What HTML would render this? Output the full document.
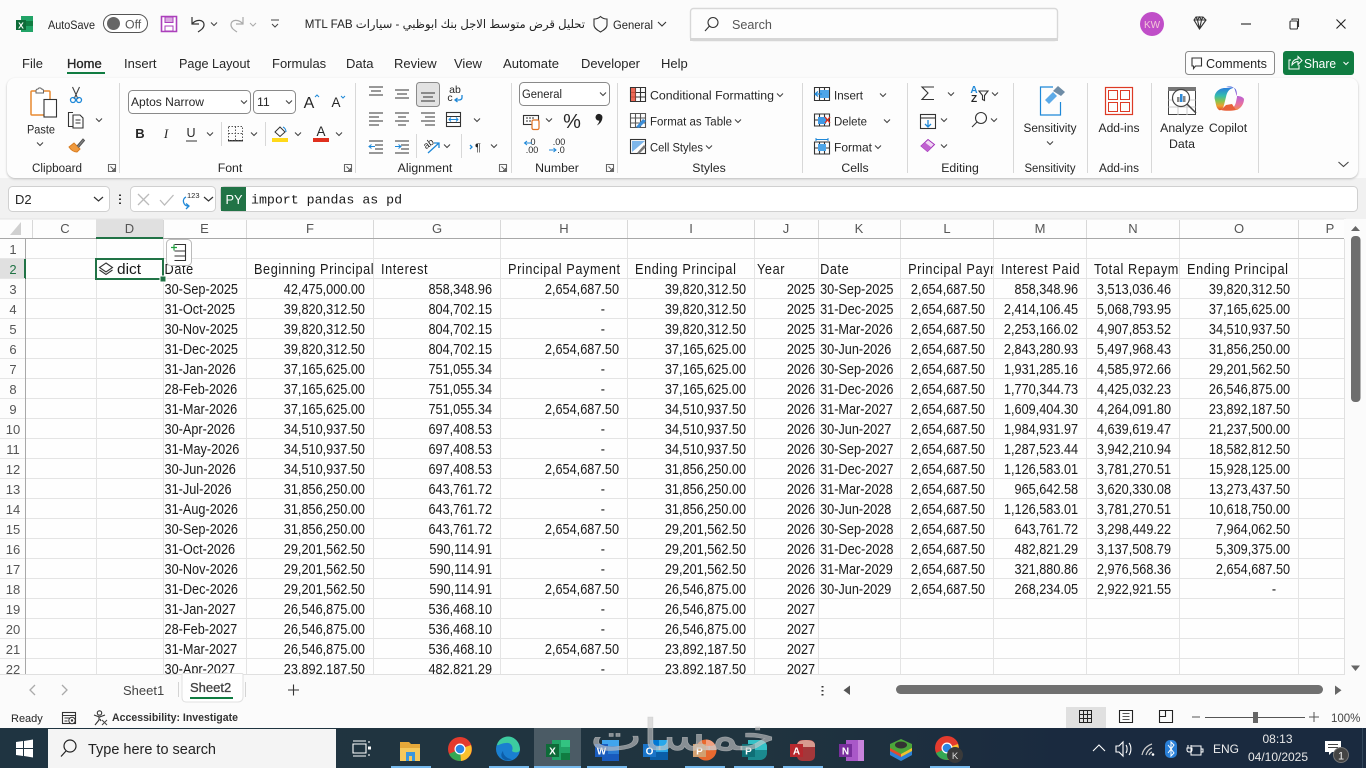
<!DOCTYPE html>
<html lang="en"><head><meta charset="utf-8"><title>Excel</title>
<style>
*{box-sizing:border-box}
html,body{margin:0;padding:0;width:1366px;height:768px;overflow:hidden;background:#fbfbfb}
body{position:relative;font-family:"Liberation Sans",sans-serif;color:#222}
#band{position:absolute;left:0;top:178px;width:1366px;height:41px;background:#f1f1f1}
#rib{position:absolute;left:7px;top:78px;width:1351px;height:100px;background:#fdfdfd;border-radius:8px;box-shadow:0 1px 2px #bbb}
#grid{position:absolute;left:25px;top:239px;width:1319px;height:435px;overflow:hidden;background-color:#fefefe;background-image:repeating-linear-gradient(to bottom,transparent 0,transparent 19px,#e4e4e4 19px,#e4e4e4 20px)}
#vl{position:absolute;left:0;top:0;width:1319px;height:435px}
table{position:absolute;left:0;top:1px;transform:scaleX(.87);transform-origin:0 0;border-collapse:separate;border-spacing:0;table-layout:fixed;width:1518.4px;font-family:"Liberation Sans",sans-serif;font-size:14.6px;color:#1a1a1a}
td{height:20px;padding:0 9.2px 0 0;text-align:right;white-space:nowrap;overflow:hidden;line-height:19px}
td.l{text-align:left;padding:0 0 0 1.8px}
td.k{text-align:left;padding:0 0 0 2.3px}
td.h{text-align:left;padding:0 0 0 9.2px;letter-spacing:.7px}
td.hl{letter-spacing:.7px}
td.y{padding-right:3.4px}
td.d{padding-right:25.3px}
svg#o{position:absolute;left:0;top:0;width:1366px;height:768px;overflow:hidden}
svg#o text{font-family:"Liberation Sans",sans-serif;font-size:12.3px;fill:#262626}
svg#o .m{text-anchor:middle}
svg#o .t{font-size:13px}
svg#o .n{font-size:14.6px;fill:#1a1a1a}
.s{fill:none;stroke:#333;stroke-width:1.1}
svg#o .rh{font-size:13px;fill:#555;text-anchor:middle}
svg#o .ch{font-size:13px;fill:#555;text-anchor:middle}
.b{fill:none;stroke:#1e88d8;stroke-width:1.3}
#title{position:absolute;left:299px;width:286px;top:16px;direction:rtl;text-align:right;font:11.6px "Liberation Sans","DejaVu Sans",sans-serif;color:#222;white-space:nowrap;line-height:17px}
</style></head><body>
<div id="band"></div><div id="rib"></div>
<div id="grid">
<svg id="vl" viewBox="0 0 1319 435"><path d="M71.500 0v435M138.500 0v435M221.500 0v435M348.500 0v435M475.500 0v435M602.500 0v435M729.500 0v435M793.500 0v435M875.500 0v435M968.500 0v435M1061.500 0v435M1154.500 0v435M1273.500 0v435" stroke="#e4e4e4" fill="none"/></svg>
<table><colgroup><col style="width:81.6px"><col style="width:77px"><col style="width:95.4px"><col style="width:146px"><col style="width:146px"><col style="width:146px"><col style="width:146px"><col style="width:73.6px"><col style="width:94.25px"><col style="width:106.9px"><col style="width:106.9px"><col style="width:106.9px"><col style="width:136.8px"><col style="width:55.2px"></colgroup>
<tr><td></td><td></td><td></td><td></td><td></td><td></td><td></td><td></td><td></td><td></td><td></td><td></td><td></td><td></td></tr>
<tr><td></td><td></td><td class="l hl">Date</td><td class="h">Beginning Principal</td><td class="h">Interest</td><td class="h">Principal Payment</td><td class="h">Ending Principal</td><td class="k hl" style="padding-left:3.4px">Year</td><td class="k hl">Date</td><td class="h">Principal Payment</td><td class="h">Interest Paid</td><td class="h">Total Repayment</td><td class="h">Ending Principal</td><td></td></tr>
<tr><td></td><td></td><td class="l">30-Sep-2025</td><td>42,475,000.00</td><td>858,348.96</td><td>2,654,687.50</td><td>39,820,312.50</td><td class="y">2025</td><td class="k">30-Sep-2025</td><td>2,654,687.50</td><td>858,348.96</td><td>3,513,036.46</td><td>39,820,312.50</td><td></td></tr>
<tr><td></td><td></td><td class="l">31-Oct-2025</td><td>39,820,312.50</td><td>804,702.15</td><td class="d">-</td><td>39,820,312.50</td><td class="y">2025</td><td class="k">31-Dec-2025</td><td>2,654,687.50</td><td>2,414,106.45</td><td>5,068,793.95</td><td>37,165,625.00</td><td></td></tr>
<tr><td></td><td></td><td class="l">30-Nov-2025</td><td>39,820,312.50</td><td>804,702.15</td><td class="d">-</td><td>39,820,312.50</td><td class="y">2025</td><td class="k">31-Mar-2026</td><td>2,654,687.50</td><td>2,253,166.02</td><td>4,907,853.52</td><td>34,510,937.50</td><td></td></tr>
<tr><td></td><td></td><td class="l">31-Dec-2025</td><td>39,820,312.50</td><td>804,702.15</td><td>2,654,687.50</td><td>37,165,625.00</td><td class="y">2025</td><td class="k">30-Jun-2026</td><td>2,654,687.50</td><td>2,843,280.93</td><td>5,497,968.43</td><td>31,856,250.00</td><td></td></tr>
<tr><td></td><td></td><td class="l">31-Jan-2026</td><td>37,165,625.00</td><td>751,055.34</td><td class="d">-</td><td>37,165,625.00</td><td class="y">2026</td><td class="k">30-Sep-2026</td><td>2,654,687.50</td><td>1,931,285.16</td><td>4,585,972.66</td><td>29,201,562.50</td><td></td></tr>
<tr><td></td><td></td><td class="l">28-Feb-2026</td><td>37,165,625.00</td><td>751,055.34</td><td class="d">-</td><td>37,165,625.00</td><td class="y">2026</td><td class="k">31-Dec-2026</td><td>2,654,687.50</td><td>1,770,344.73</td><td>4,425,032.23</td><td>26,546,875.00</td><td></td></tr>
<tr><td></td><td></td><td class="l">31-Mar-2026</td><td>37,165,625.00</td><td>751,055.34</td><td>2,654,687.50</td><td>34,510,937.50</td><td class="y">2026</td><td class="k">31-Mar-2027</td><td>2,654,687.50</td><td>1,609,404.30</td><td>4,264,091.80</td><td>23,892,187.50</td><td></td></tr>
<tr><td></td><td></td><td class="l">30-Apr-2026</td><td>34,510,937.50</td><td>697,408.53</td><td class="d">-</td><td>34,510,937.50</td><td class="y">2026</td><td class="k">30-Jun-2027</td><td>2,654,687.50</td><td>1,984,931.97</td><td>4,639,619.47</td><td>21,237,500.00</td><td></td></tr>
<tr><td></td><td></td><td class="l">31-May-2026</td><td>34,510,937.50</td><td>697,408.53</td><td class="d">-</td><td>34,510,937.50</td><td class="y">2026</td><td class="k">30-Sep-2027</td><td>2,654,687.50</td><td>1,287,523.44</td><td>3,942,210.94</td><td>18,582,812.50</td><td></td></tr>
<tr><td></td><td></td><td class="l">30-Jun-2026</td><td>34,510,937.50</td><td>697,408.53</td><td>2,654,687.50</td><td>31,856,250.00</td><td class="y">2026</td><td class="k">31-Dec-2027</td><td>2,654,687.50</td><td>1,126,583.01</td><td>3,781,270.51</td><td>15,928,125.00</td><td></td></tr>
<tr><td></td><td></td><td class="l">31-Jul-2026</td><td>31,856,250.00</td><td>643,761.72</td><td class="d">-</td><td>31,856,250.00</td><td class="y">2026</td><td class="k">31-Mar-2028</td><td>2,654,687.50</td><td>965,642.58</td><td>3,620,330.08</td><td>13,273,437.50</td><td></td></tr>
<tr><td></td><td></td><td class="l">31-Aug-2026</td><td>31,856,250.00</td><td>643,761.72</td><td class="d">-</td><td>31,856,250.00</td><td class="y">2026</td><td class="k">30-Jun-2028</td><td>2,654,687.50</td><td>1,126,583.01</td><td>3,781,270.51</td><td>10,618,750.00</td><td></td></tr>
<tr><td></td><td></td><td class="l">30-Sep-2026</td><td>31,856,250.00</td><td>643,761.72</td><td>2,654,687.50</td><td>29,201,562.50</td><td class="y">2026</td><td class="k">30-Sep-2028</td><td>2,654,687.50</td><td>643,761.72</td><td>3,298,449.22</td><td>7,964,062.50</td><td></td></tr>
<tr><td></td><td></td><td class="l">31-Oct-2026</td><td>29,201,562.50</td><td>590,114.91</td><td class="d">-</td><td>29,201,562.50</td><td class="y">2026</td><td class="k">31-Dec-2028</td><td>2,654,687.50</td><td>482,821.29</td><td>3,137,508.79</td><td>5,309,375.00</td><td></td></tr>
<tr><td></td><td></td><td class="l">30-Nov-2026</td><td>29,201,562.50</td><td>590,114.91</td><td class="d">-</td><td>29,201,562.50</td><td class="y">2026</td><td class="k">31-Mar-2029</td><td>2,654,687.50</td><td>321,880.86</td><td>2,976,568.36</td><td>2,654,687.50</td><td></td></tr>
<tr><td></td><td></td><td class="l">31-Dec-2026</td><td>29,201,562.50</td><td>590,114.91</td><td>2,654,687.50</td><td>26,546,875.00</td><td class="y">2026</td><td class="k">30-Jun-2029</td><td>2,654,687.50</td><td>268,234.05</td><td>2,922,921.55</td><td class="d">-</td><td></td></tr>
<tr><td></td><td></td><td class="l">31-Jan-2027</td><td>26,546,875.00</td><td>536,468.10</td><td class="d">-</td><td>26,546,875.00</td><td class="y">2027</td><td></td><td></td><td></td><td></td><td></td><td></td></tr>
<tr><td></td><td></td><td class="l">28-Feb-2027</td><td>26,546,875.00</td><td>536,468.10</td><td class="d">-</td><td>26,546,875.00</td><td class="y">2027</td><td></td><td></td><td></td><td></td><td></td><td></td></tr>
<tr><td></td><td></td><td class="l">31-Mar-2027</td><td>26,546,875.00</td><td>536,468.10</td><td>2,654,687.50</td><td>23,892,187.50</td><td class="y">2027</td><td></td><td></td><td></td><td></td><td></td><td></td></tr>
<tr><td></td><td></td><td class="l">30-Apr-2027</td><td>23,892,187.50</td><td>482,821.29</td><td class="d">-</td><td>23,892,187.50</td><td class="y">2027</td><td></td><td></td><td></td><td></td><td></td><td></td></tr>
</table></div>
<div id="title">تحليل قرض متوسط الاجل بنك ابوظبي - سيارات MTL FAB</div>

<svg id="o" viewBox="0 0 1366 768" xmlns="http://www.w3.org/2000/svg">
<defs><path id="cv" d="M-3 -1.5L0 1.5L3 -1.5" fill="none" stroke="#444" stroke-width="1.1"/>
<linearGradient id="cl" x1="0" y1="0" x2="0" y2="1"><stop offset="0" stop-color="#2a7fdc"/><stop offset=".35" stop-color="#34bcae"/><stop offset=".6" stop-color="#8cc34a"/><stop offset=".8" stop-color="#f0a030"/><stop offset="1" stop-color="#e0502c"/></linearGradient>
<linearGradient id="cr" x1="0" y1="0" x2="0" y2="1"><stop offset="0" stop-color="#2c5fd8"/><stop offset=".4" stop-color="#b860d8"/><stop offset=".75" stop-color="#e870a0"/><stop offset="1" stop-color="#f09050"/></linearGradient>
<linearGradient id="tb" x1="0" y1="0" x2="1" y2="0"><stop offset="0" stop-color="#1f3441"/><stop offset=".55" stop-color="#20343f"/><stop offset=".78" stop-color="#1a2a3f"/><stop offset="1" stop-color="#1a2a3f"/></linearGradient></defs>

<!-- title bar -->
<rect x="21" y="16" width="12" height="16" fill="#21a366"/><rect x="21" y="21" width="12" height="5" fill="#107c41"/><rect x="16" y="20" width="10" height="10" fill="#0e6b38"/><text x="21" y="28.500" class="m" style="font-size:8.500px;font-weight:bold;fill:#fff">X</text>
<text x="48" y="29" textLength="47" lengthAdjust="spacingAndGlyphs">AutoSave</text>
<rect x="103.500" y="14.500" width="44" height="18" rx="9" fill="#fff" stroke="#555"/><circle cx="113.500" cy="23.500" r="6.500" fill="#666"/><text x="125" y="28.500" style="fill:#555">Off</text>
<path d="M161.500 16.500h15v15h-15z" fill="#fff" stroke="#ab3fbb" stroke-width="1.600"/><rect x="165" y="17" width="8" height="5.500" fill="#d9a9e0" stroke="#ab3fbb"/><rect x="165" y="26" width="8" height="5" fill="none" stroke="#ab3fbb"/>
<path d="M192 17v7h7M192 24c4-5 12-5 12 1c0 3-3 5-6 7" fill="none" stroke="#333" stroke-width="1.200"/><use href="#cv" x="214" y="24"/>
<path d="M243 17v7h-7M243 24c-4-5-12-5-12 1c0 3 3 5 6 7" fill="none" stroke="#aaa" stroke-width="1.200"/><path d="M250 23l3 3l3-3" fill="none" stroke="#aaa"/>
<path d="M271 20h8M272 24l3 3l3-3" fill="none" stroke="#444"/>
<path d="M600.500 16.500c2 2 4 2.500 6.500 2.500v6c0 3-3 5-6.500 7c-3.500-2-6.500-4-6.500-7v-6c2.500 0 4.500-.5 6.500-2.500z" fill="none" stroke="#333" stroke-width="1.100"/>
<text x="613" y="29" textLength="40" lengthAdjust="spacingAndGlyphs">General</text><path d="M658 22l4 4l4-4" fill="none" stroke="#333" stroke-width="1.100"/>
<rect x="690.500" y="8.500" width="367" height="32" rx="3" fill="#fdfdfd" stroke="#d8d8d8" stroke-width="1.400"/>
<rect x="690" y="38" width="368" height="3" fill="#d6d6d6"/>
<circle cx="713" cy="22.500" r="5" class="s"/><path d="M709.500 26l-4.500 5" class="s"/><text x="732" y="29" style="fill:#555;font-size:12.600px">Search</text>
<circle cx="1152" cy="24" r="12" fill="#c04ec8"/><text x="1152" y="28" class="m" style="font-size:10px;fill:#f3c7d8">KW</text>
<path d="M1194 20l2-3h7l3 3l-6.500 9zM1194 20h12M1197.500 20l2 9l2-9M1196 17l1.500 3l2-3l2 3l1.500-3" class="s"/>
<path d="M1241 24h10" stroke="#222" stroke-width="1.100"/><rect x="1290" y="21" width="7.500" height="8" rx="1" class="s"/><path d="M1292 20v-1h6.500v7.500h-1" class="s"/><path d="M1336.500 19.500l9 9M1345.500 19.500l-9 9" stroke="#222" stroke-width="1.100"/>

<!-- tabs -->
<g><text x="22" y="68" class="t">File</text><text x="67" y="68" class="t" style="stroke:#222;stroke-width:.35">Home</text><text x="124" y="68" class="t">Insert</text><text x="179" y="68" class="t" textLength="71" lengthAdjust="spacingAndGlyphs">Page Layout</text><text x="272" y="68" class="t">Formulas</text><text x="346" y="68" class="t">Data</text><text x="394" y="68" class="t">Review</text><text x="454" y="68" class="t">View</text><text x="503" y="68" class="t" textLength="56" lengthAdjust="spacingAndGlyphs">Automate</text><text x="581" y="68" class="t" textLength="59" lengthAdjust="spacingAndGlyphs">Developer</text><text x="661" y="68" class="t">Help</text></g>
<rect x="67" y="72" width="38" height="2" fill="#107c41"/>
<rect x="1185.500" y="51.500" width="89" height="23" rx="3" fill="#fdfdfd" stroke="#8a8a8a"/>
<path d="M1192 58h9.500v8h-6l-2 2.500v-2.500h-1.500z" class="s"/><text x="1206" y="68" style="font-size:12.600px" textLength="61" lengthAdjust="spacingAndGlyphs">Comments</text>
<rect x="1283" y="51" width="71" height="24" rx="3" fill="#107c41"/>
<path d="M1291 60h-2v9h10v-4M1292 65c0-4 3-6 6-6v-2.500l4 4l-4 4v-3c-2 0-4 1-6 3.500z" fill="none" stroke="#fff"/><text x="1304" y="68" style="font-size:12.800px;fill:#fff" textLength="32" lengthAdjust="spacingAndGlyphs">Share</text><path d="M1343.500 62l2.500 2.500l2.500-2.500" fill="none" stroke="#fff"/>

<!-- ribbon separators -->
<path d="M119.500 83v90M355.500 83v90M511.500 83v90M617.500 83v90M802.500 83v90M907.500 83v90M1013.500 83v90M1087.500 83v90M1151.500 83v90M1258.500 83v90" stroke="#d8d8d8"/>
<path d="M221.500 122v24M265.500 122v24M416.500 134v24M461.500 134v24" stroke="#d8d8d8"/>

<!-- clipboard -->
<rect x="31" y="91" width="19" height="24" rx="1" fill="#fff" stroke="#e88a30" stroke-width="1.500"/><path d="M36 91c0-1.500 1-2 2-2c.5-1.500 3-1.500 3.500 0c1 0 2 .5 2 2v2h-7.500z" fill="#fff" stroke="#666"/><rect x="44" y="99.500" width="12.500" height="17.500" fill="#fff" stroke="#333" stroke-width="1.100"/>
<text x="41" y="133.500" class="m" textLength="28" lengthAdjust="spacingAndGlyphs">Paste</text><use href="#cv" x="40" y="144"/>
<path d="M72.500 87l5.500 12M79.500 87l-5.500 12" stroke="#444" stroke-width="1.100"/><circle cx="73" cy="100" r="2.500" fill="none" stroke="#1e88d8" stroke-width="1.300"/><circle cx="79" cy="100" r="2.500" fill="none" stroke="#1e88d8" stroke-width="1.300"/>
<path d="M73 112.500h-4.500v14h4M73 115h7l3 3v10h-10zM75.500 120h5M75.500 123h5" class="s"/><use href="#cv" x="99" y="120"/>
<path d="M69 147l5-4l6 6l-3 3c-3 0-6-2-8-5z" fill="#f09a3e" stroke="#d87c20"/><path d="M77 146l6-7l1.500 1.500l-6 7" fill="#888" stroke="#555"/>
<text x="57" y="172" class="m" textLength="50" lengthAdjust="spacingAndGlyphs">Clipboard</text>
<path d="M108.500 164.500h7v7h-7zM110.500 166.500l4 4M114.500 168v2.500h-2.500" class="s" style="stroke:#666"/>

<!-- font -->
<rect x="128.500" y="90.500" width="122" height="23" rx="4" fill="#fff" stroke="#8a8a8a"/><text x="131" y="106" textLength="73" lengthAdjust="spacingAndGlyphs">Aptos Narrow</text><use href="#cv" x="244" y="102"/>
<rect x="253.500" y="90.500" width="42" height="23" rx="4" fill="#fff" stroke="#8a8a8a"/><text x="257" y="106">11</text><use href="#cv" x="289" y="102"/>
<text x="309" y="108" class="m" style="font-size:16px">A</text><path d="M315 97l2-2l2 2" fill="none" stroke="#1e88d8"/><text x="336" y="107" class="m" style="font-size:13.500px">A</text><path d="M341 96l2 2l2-2" fill="none" stroke="#1e88d8"/>
<text x="140" y="138" class="m" style="font-weight:bold;font-size:13px">B</text><text x="166" y="138" class="m" style="font-style:italic;font-size:13px;font-family:'Liberation Serif',serif">I</text><text x="191" y="137" class="m" style="font-size:12.500px">U</text><path d="M186 141h11" stroke="#333"/><use href="#cv" x="210" y="134"/>
<path d="M228.500 126.500h14v14h-14zM235.500 126.500v14M228.500 133.500h14" fill="none" stroke="#555" stroke-dasharray="1.500 1.500"/><path d="M228 140.800h15" stroke="#222" stroke-width="1.200"/><use href="#cv" x="254" y="134"/>
<path d="M275 132l5-5l5 5l-5 4.500z" fill="none" stroke="#333"/><path d="M283 127c2 1 3 3 3 5" stroke="#1e88d8" fill="none"/><rect x="272" y="138" width="16" height="4" fill="#ffd91a"/><use href="#cv" x="298" y="134"/>
<text x="321" y="136" class="m" style="font-size:13.500px">A</text><rect x="313" y="138" width="16" height="4" fill="#e0301e"/><use href="#cv" x="339" y="134"/>
<text x="230" y="172" class="m">Font</text>
<path d="M344.500 164.500h7v7h-7zM346.500 166.500l4 4M350.500 168v2.500h-2.500" class="s" style="stroke:#666"/>

<!-- alignment -->
<rect x="416.500" y="82.500" width="23" height="24" rx="3" fill="#e2e2e2" stroke="#8a8a8a"/>
<path d="M369 87h14M371 91h10M369 95h14M395 90h14M397 94h10M395 98h14M421 93h14M423 97h10M421 101h14" class="s"/>
<text x="455" y="93" class="m" style="font-size:10.500px">ab</text><text x="450" y="101" class="m" style="font-size:10.500px">c</text><path d="M462 95v2.500c0 2-2 2.500-3.500 2.500h-3M457.500 98l-2.500 2l2.500 2" class="b"/>
<path d="M369 113h14M369 117h10M369 121h14M369 125h10M395 113h14M398 117h8M395 121h14M398 125h8M421 113h14M425 117h10M421 121h14M425 125h10" class="s"/>
<rect x="446.500" y="112.500" width="14" height="14" class="s"/><path d="M446.500 116.500h14M446.500 122.500h14" class="s"/><path d="M449 119.500h9M451 117.500l-2 2l2 2M456 117.500l2 2l-2 2" class="b" style="stroke-width:1"/><use href="#cv" x="477" y="120"/>
<path d="M369 141h14M375 145h8M375 149h8M369 153h14" class="s"/><path d="M369 146.500h6M371.500 144.500l-2.500 2l2.500 2" class="b" style="stroke-width:1"/>
<path d="M395 141h14M401 145h8M401 149h8M395 153h14" class="s"/><path d="M395 146.500h6M398.500 144.500l2.500 2l-2.500 2" class="b" style="stroke-width:1"/>
<text x="428" y="147" class="m" transform="rotate(-35 428 143)" style="font-size:9.500px">ab</text><path d="M428 153l11-10M434 143h5v5" class="b"/><use href="#cv" x="447" y="146"/>
<path d="M470 145l2 2l-2 2" class="b"/><text x="478" y="151" class="m" style="font-size:11px">¶</text><use href="#cv" x="494" y="146"/>
<text x="425" y="172" class="m">Alignment</text>
<path d="M499.500 164.500h7v7h-7zM501.500 166.500l4 4M505.500 168v2.500h-2.500" class="s" style="stroke:#666"/>

<!-- number -->
<rect x="519.500" y="82.500" width="90" height="23" rx="4" fill="#fff" stroke="#8a8a8a"/><text x="522" y="98" textLength="40" lengthAdjust="spacingAndGlyphs">General</text><use href="#cv" x="603" y="94"/>
<rect x="523.500" y="115.500" width="15" height="9" class="s"/><path d="M526 118h2M529 118h2M532 118h2M526 121h2M529 121h2" stroke="#333"/><rect x="532" y="120" width="7" height="9.500" rx="1.500" fill="#fff" stroke="#e07020" stroke-width="1.200"/><use href="#cv" x="549" y="120"/>
<text x="572" y="128" class="m" style="font-size:20px">%</text><path d="M595.500 117a3.500 3.500 0 1 1 6.800 1.500c-.4 3-2.500 5.500-5.500 7c1.500-2 2.500-3.500 2.500-5c-2 .5-3.800-1.200-3.800-3.500z" fill="#222"/>
<text x="533" y="145" class="m" style="font-size:9px">0</text><text x="532" y="153" class="m" style="font-size:9px">.00</text><path d="M525 143h7M527 141l-2.500 2l2.500 2" class="b" style="stroke-width:1"/>
<text x="559" y="145" class="m" style="font-size:9px">.00</text><text x="561" y="153" class="m" style="font-size:9px">.0</text><path d="M549 150h7M553.500 148l2.500 2l-2.500 2" class="b" style="stroke-width:1"/>
<text x="557" y="172" class="m">Number</text>
<path d="M606.500 164.500h7v7h-7zM608.500 166.500l4 4M612.500 168v2.500h-2.500" class="s" style="stroke:#666"/>

<!-- styles -->
<path d="M630.500 87.500h15v14h-15zM635.500 87.500v14M640.500 87.500v14M630.500 92.500h15M630.500 97h15" class="s"/><rect x="631" y="88" width="4.500" height="13" fill="#e8503a" opacity=".85"/>
<text x="650" y="99.500" textLength="124" lengthAdjust="spacingAndGlyphs">Conditional Formatting</text><use href="#cv" x="780" y="95"/>
<path d="M630.500 113.500h15v14h-15zM635.500 113.500v14M640.500 113.500v14M630.500 118h15M630.500 123h15" class="s" style="stroke:#555"/><path d="M636 127l7-8l3 2l-7 7z" fill="#3c8ed8"/>
<text x="650" y="125.500" textLength="82" lengthAdjust="spacingAndGlyphs">Format as Table</text><use href="#cv" x="738" y="121"/>
<rect x="630.500" y="139.500" width="15" height="14" class="s"/><path d="M632 152v-11h13z" fill="#7eb6ea"/><path d="M637 153l7-8l2 2l-7 7z" fill="#777"/>
<text x="650" y="151.500" textLength="53" lengthAdjust="spacingAndGlyphs">Cell Styles</text><use href="#cv" x="709" y="147"/>
<text x="709" y="172" class="m">Styles</text>

<!-- cells -->
<path d="M814.500 87.500h15v13h-15zM819.500 87.500v13M824.500 87.500v13M814.500 94h15" class="s"/><rect x="820" y="90" width="9" height="8" fill="#4ea5e8"/><path d="M822 94h-7M818 91.500l-3 2.500l3 2.500" fill="none" stroke="#1e88d8" stroke-width="1.200"/>
<text x="834" y="99.500" textLength="29" lengthAdjust="spacingAndGlyphs">Insert</text><use href="#cv" x="883" y="95"/>
<path d="M814.500 114h15v12h-15zM819.500 114v12M824.500 114v12M814.500 120h15" class="s"/><rect x="818" y="117" width="8" height="7" fill="#3f9ae6"/><path d="M825 117l5 6M830 117l-5 6" stroke="#e0301e" stroke-width="1.300"/>
<text x="834" y="125.500" textLength="33" lengthAdjust="spacingAndGlyphs">Delete</text><use href="#cv" x="887" y="121"/>
<path d="M814.500 142h15v12h-15zM819.500 142v12M824.500 142v12M814.500 148h15" class="s"/><rect x="818" y="144" width="8" height="7" fill="#4ea5e8"/><path d="M816 139.500h12M816 138v3M828 138v3" fill="none" stroke="#1e88d8"/>
<text x="834" y="151.500" textLength="38" lengthAdjust="spacingAndGlyphs">Format</text><use href="#cv" x="878" y="147"/>
<text x="855" y="172" class="m">Cells</text>

<!-- editing -->
<path d="M934 87h-12l6 6l-6 6.500h12" class="s"/><use href="#cv" x="951" y="94"/>
<text x="974" y="93" class="m" style="font-size:10px;fill:#1e88d8;font-weight:bold">A</text><text x="974" y="102" class="m" style="font-size:10px;font-weight:bold">Z</text><path d="M979 91h9l-3.500 4.500v5l-2-1v-4z" class="s"/><use href="#cv" x="995" y="94"/>
<rect x="920.500" y="114.500" width="15" height="14" class="s"/><path d="M920.500 118h15" class="s"/><path d="M928 120v7M925 124l3 3l3-3" class="b"/><use href="#cv" x="944" y="120"/>
<circle cx="981" cy="118" r="5.500" class="s"/><path d="M977 122l-5 5" class="s"/><use href="#cv" x="994" y="120"/>
<path d="M921 146l7-6.500l6.500 5l-7 7z" fill="#f0d8f4" stroke="#a030b8"/><path d="M921 146l4-3.500l6.500 5l-4 4z" fill="#c060d0"/><use href="#cv" x="944" y="146"/>
<text x="960" y="172" class="m">Editing</text>

<!-- sensitivity -->
<path d="M1053 87h-12.500v28h20v-13" fill="none" stroke="#1e88d8" stroke-width="1.200"/><path d="M1045 100l8-8l4 4l-8 8z" fill="#5caae8"/><path d="M1053 91l5-5l7 6l-4 4z" fill="#6e8ca6"/>
<text x="1050" y="132" class="m" textLength="53" lengthAdjust="spacingAndGlyphs">Sensitivity</text><use href="#cv" x="1050" y="143"/>
<text x="1050" y="172" class="m" textLength="51" lengthAdjust="spacingAndGlyphs">Sensitivity</text>
<!-- add-ins -->
<rect x="1105.500" y="87.500" width="27" height="27" fill="none" stroke="#dd3a25" stroke-width="1.200"/><rect x="1108.500" y="90.500" width="9" height="9" fill="none" stroke="#dd3a25"/><rect x="1120.500" y="90.500" width="9" height="9" fill="none" stroke="#dd3a25"/><rect x="1108.500" y="102.500" width="9" height="9" fill="none" stroke="#dd3a25"/><rect x="1120.500" y="102.500" width="9" height="9" fill="none" stroke="#dd3a25"/>
<text x="1119" y="132" class="m" textLength="41" lengthAdjust="spacingAndGlyphs">Add-ins</text><text x="1119" y="172" class="m" textLength="40" lengthAdjust="spacingAndGlyphs">Add-ins</text>
<!-- analyze -->
<path d="M1168.500 87.500h27v27h-27z" fill="#fff" stroke="#444"/><rect x="1168" y="87" width="28" height="4" fill="#777"/><path d="M1168.500 100h27M1168.500 107h27M1178 91v24M1187 91v24" stroke="#ccc"/><circle cx="1181" cy="98" r="8.500" fill="#fff" stroke="#444" stroke-width="1.200"/><path d="M1187 104l9 9" stroke="#444" stroke-width="1.500"/><rect x="1177" y="97" width="2.500" height="5" fill="#888"/><rect x="1180" y="94" width="2.500" height="8" fill="#2e8ad8"/><rect x="1183" y="96" width="2.500" height="6" fill="#888"/>
<text x="1182" y="132" class="m">Analyze</text><text x="1182" y="148" class="m">Data</text>
<!-- copilot -->
<path d="M1215 100c-2-7 4-12 10-12h8c-4 1-6 4-7 9l-2 8c-1 4-3 6-5 5c-3-2-3-6-4-10z" fill="url(#cl)"/><path d="M1226 88c3-1 8-1 9 3c1 3 1 5 2 6c3 0 6 1 7 3c0 5-3 9-7 11h-8c4-1 6-4 7-8l1-5c0-3 0-8-3-9z" fill="url(#cr)" transform="translate(0 -1)"/><path d="M1221 110c4 1 10 1 15 0l-4-6l-6 1z" fill="#e8603a"/>
<text x="1228" y="132" class="m">Copilot</text>
<path d="M1338.500 162l5 4.500l5-4.500" fill="none" stroke="#444" stroke-width="1.100"/>

<!-- formula bar -->
<rect x="8.500" y="186.500" width="101" height="25" rx="4" fill="#fff" stroke="#d0d0d0"/><text x="15" y="204" style="font-size:13px">D2</text><path d="M94 197l4.500 4l4.500-4" fill="none" stroke="#333" stroke-width="1.200"/>
<path d="M120 194.500v1.500M120 198.500v1.500M120 202.500v1.500" stroke="#333" stroke-width="2"/>
<rect x="130.500" y="186.500" width="85" height="25" rx="4" fill="#fff" stroke="#d0d0d0"/><path d="M138 194l11 11M149 194l-11 11" stroke="#bbb" stroke-width="1.300"/><path d="M160 200l4.500 5l9-10" fill="none" stroke="#bbb" stroke-width="1.300"/>
<path d="M186 197c-2 1-3 3-2.500 5c.5 2 2 4 4.500 4M186 209l3-3l-3-2.500" class="b"/><text x="187" y="198" style="font-size:7.500px">123</text><path d="M204 197l4.500 4l4.500-4" fill="none" stroke="#333" stroke-width="1.200"/>
<rect x="220.500" y="186.500" width="1137" height="25" rx="4" fill="#fff" stroke="#d0d0d0"/><rect x="221" y="187" width="25" height="24" fill="#217346"/><text x="234" y="204" class="m" style="fill:#fff;font-size:12.800px">PY</text>
<text x="251" y="203.500" style="font-family:'Liberation Mono',monospace;font-size:13.250px;fill:#1a1a1a">import pandas as pd</text>

<!-- grid headers -->
<rect x="0" y="219" width="1346" height="19" fill="#fdfdfd"/><rect x="96" y="219" width="67" height="18" fill="#e0e0e0"/><rect x="0" y="239" width="25" height="436" fill="#fdfdfd"/>
<path d="M21 222v13h-11z" fill="#d0d0d0"/>
<path d="M0 238.500h1344" stroke="#a8a8a8"/><rect x="96" y="237" width="67" height="2" fill="#217346"/>
<path d="M32.500 220v18M163.500 220v18M246.500 220v18M373.500 220v18M500.500 220v18M627.500 220v18M754.500 220v18M818.500 220v18M900.500 220v18M993.500 220v18M1086.500 220v18M1179.500 220v18M1298.500 220v18" stroke="#d8d8d8"/>
<path d="M0 219h1346" stroke="#e4e4e4"/>
<text x="65" y="233" class="ch">C</text><text x="129.500" y="233" class="ch">D</text><text x="204.500" y="233" class="ch">E</text><text x="310" y="233" class="ch">F</text><text x="437" y="233" class="ch">G</text><text x="564" y="233" class="ch">H</text><text x="691" y="233" class="ch">I</text><text x="786" y="233" class="ch">J</text><text x="859" y="233" class="ch">K</text><text x="947" y="233" class="ch">L</text><text x="1040" y="233" class="ch">M</text><text x="1133" y="233" class="ch">N</text><text x="1239" y="233" class="ch">O</text><text x="1330" y="233" class="ch">P</text>
<rect x="0" y="259" width="25" height="20" fill="#e0e0e0"/><path d="M25.500 239v436" stroke="#a8a8a8"/><rect x="24" y="259" width="2" height="20" fill="#217346"/>
<path d="M0 258.500h25M0 278.500h25M0 298.500h25M0 318.500h25M0 338.500h25M0 358.500h25M0 378.500h25M0 398.500h25M0 418.500h25M0 438.500h25M0 458.500h25M0 478.500h25M0 498.500h25M0 518.500h25M0 538.500h25M0 558.500h25M0 578.500h25M0 598.500h25M0 618.500h25M0 638.500h25M0 658.500h25" stroke="#e6e6e6"/>
<text x="13" y="254" class="rh">1</text><text x="13" y="274" class="rh" style="fill:#217346">2</text><text x="13" y="294" class="rh">3</text><text x="13" y="314" class="rh">4</text><text x="13" y="334" class="rh">5</text><text x="13" y="354" class="rh">6</text><text x="13" y="374" class="rh">7</text><text x="13" y="394" class="rh">8</text><text x="13" y="414" class="rh">9</text><text x="13" y="434" class="rh">10</text><text x="13" y="454" class="rh">11</text><text x="13" y="474" class="rh">12</text><text x="13" y="494" class="rh">13</text><text x="13" y="514" class="rh">14</text><text x="13" y="534" class="rh">15</text><text x="13" y="554" class="rh">16</text><text x="13" y="574" class="rh">17</text><text x="13" y="594" class="rh">18</text><text x="13" y="614" class="rh">19</text><text x="13" y="634" class="rh">20</text><text x="13" y="654" class="rh">21</text><text x="13" y="674" class="rh">22</text>

<!-- selection -->
<rect x="96" y="259" width="67" height="20" fill="none" stroke="#217346" stroke-width="2"/><rect x="160" y="276" width="6" height="6" fill="#217346" stroke="#fff"/>
<path d="M106 263l6.500 4.500l-6.500 4.500l-6.500-4.500zM99.500 270l6.500 4.500l6.500-4.500" class="s"/>
<text x="117" y="274" class="n" textLength="24" lengthAdjust="spacingAndGlyphs">dict</text>
<rect x="166.500" y="239.500" width="25" height="26" rx="4" fill="#fff" stroke="#bbb"/><path d="M174.500 244.500h11v16h-11M174.500 251h11M174.500 256h11M185.500 244.500v16" class="s"/><path d="M171 247.500h6M174 244.500v6" stroke="#21a040" stroke-width="1.200"/>

<!-- v scroll -->
<rect x="1344" y="219" width="22" height="456" fill="#fbfbfb"/><path d="M1344.500 239v435" stroke="#e0e0e0"/>
<path d="M1351 231l4.500-5l4.500 5z" fill="#666"/><rect x="1351" y="236" width="9.500" height="166" rx="4" fill="#6e6e6e"/><path d="M1351 665.500h9l-4.500 5.500z" fill="#666"/>

<!-- sheet tabs -->
<rect x="0" y="675" width="1366" height="53" fill="#fbfbfb"/>
<path d="M0 674.500h1345" stroke="#e0e0e0"/>
<path d="M35 685l-5 5l5 5M62 685l5 5l-5 5" fill="none" stroke="#aaa" stroke-width="1.300"/>
<text x="123" y="695" class="t" style="fill:#444">Sheet1</text><path d="M178.500 682v15M245.500 682v15" stroke="#d4d4d4"/>
<path d="M182 675v22c0 3 1 5 4 5h52c3 0 5-2 5-5v-22c0-2-1-1.500-3-1.500h-55c-2 0-3-.5-3 1.500z" fill="#fff" stroke="#e0e0e0"/>
<text x="190" y="692" class="t" style="fill:#444;stroke:#444;stroke-width:.3">Sheet2</text><rect x="190" y="697" width="43" height="2" fill="#107c41"/>
<path d="M288 690h11M293.500 684.500v11" stroke="#333" stroke-width="1.100"/>
<path d="M822.500 686v1.500M822.500 690v1.500M822.500 694v1.500" stroke="#333" stroke-width="2"/>
<path d="M850 685.500v9.500l-6.500-4.800z" fill="#555"/><rect x="896" y="685" width="427" height="9" rx="4.500" fill="#707070"/><path d="M1335 685.500v9.500l6.500-4.800z" fill="#666"/>

<!-- status -->
<text x="11" y="722" style="font-size:11px">Ready</text>
<rect x="62.500" y="712.500" width="13" height="11" class="s"/><path d="M62.500 715.500h13M64.500 718h5M64.500 721h3" class="s"/><circle cx="72" cy="720.500" r="3.200" fill="#fff" stroke="#333"/><circle cx="72" cy="720.500" r="1.200" fill="#333"/>
<circle cx="99.500" cy="713" r="2.200" class="s"/><path d="M94 715l5.500 2l5.500-2M99 717v3l-4 5M100 719l1 2" class="s"/><path d="M102 720l5 5M107 720l-5 5" stroke="#444"/>
<text x="112" y="721" style="font-size:11px;font-weight:bold;fill:#333" textLength="126" lengthAdjust="spacingAndGlyphs">Accessibility: Investigate</text>
<rect x="1066" y="707" width="40" height="21" fill="#e0e0e0"/>
<path d="M1079.500 710.500h12v12h-12zM1083.500 710.500v12M1087.500 710.500v12M1079.500 714.500h12M1079.500 718.500h12" stroke="#222" fill="none"/>
<path d="M1119.500 710.500h13v12h-13z" stroke="#222" fill="none" stroke-width="1.100"/><path d="M1122.500 713.500h7M1122.500 716.500h7M1122.500 719.500h7" stroke="#555"/>
<path d="M1159.500 710.500h13v12h-13zM1165.500 710.500v6h-6" stroke="#222" fill="none" stroke-width="1.100"/>
<path d="M1192 717h8M1205 717.500h100M1309 717h10M1314 712v10" stroke="#555" fill="none"/>
<rect x="1253" y="712" width="5" height="11" fill="#666"/>
<text x="1331" y="722" style="font-size:11.500px;fill:#444">100%</text>

<!-- taskbar -->
<rect x="0" y="728" width="1366" height="40" fill="url(#tb)"/>
<path d="M16 742l7-1v7h-7zM24 741l9-1.500v8.500h-9zM16 749h7v7l-7-1zM24 749h9v8.500l-9-1.500z" fill="#fff"/>
<rect x="48" y="729" width="288" height="39" fill="#f4f4f4"/>
<circle cx="70" cy="746" r="6" fill="none" stroke="#222" stroke-width="1.200"/><path d="M66 751l-5 5.500" stroke="#222" stroke-width="1.200"/>
<text x="88" y="754" style="font-size:14.500px;fill:#222" textLength="128" lengthAdjust="spacingAndGlyphs">Type here to search</text>
<path d="M353 744h13v9h-13zM353 741h13M353 756h13M369 741v2M369 754v2" fill="none" stroke="#fff" stroke-width="1.100"/><rect x="368" y="746.500" width="3" height="3" fill="#fff"/>
<rect x="534" y="728" width="47" height="38" fill="#4b5b65"/>
<!-- folder -->
<path d="M400 744h20v17h-20z" fill="#f5c85c"/><path d="M400 742h9l2 2h9v4h-20z" fill="#e5a83a"/><rect x="406" y="752" width="9" height="9" fill="#3a96dd"/><rect x="409" y="756" width="3" height="5" fill="#f5c85c"/>
<!-- chrome -->
<circle cx="460" cy="749" r="12" fill="#e33b2e"/><path d="M460 749l-11 5a12 12 0 0 0 12 7z" fill="#34a853"/><path d="M460 749l11-4a12 12 0 0 1-10 16z" fill="#fbc02d"/><circle cx="460" cy="749" r="5.500" fill="#fff"/><circle cx="460" cy="749" r="4.300" fill="#2b85e4"/>
<!-- edge -->
<circle cx="508" cy="749" r="12" fill="#1a7fd0"/><path d="M497 745c2-8 12-11 18-6c4 3 5 8 5 11c-1 3-6 3-8 1c2-5-2-9-6-8c-5 0-8 3-9 2z" fill="#3dcba0"/><path d="M503 751c0 4 4 8 9 8c-7 4-14-2-9-8z" fill="#0d5ea8"/>
<!-- excel -->
<rect x="552" y="740" width="18" height="20" fill="#21a366"/><rect x="561" y="740" width="9" height="7" fill="#33c481"/><rect x="561" y="753" width="9" height="7" fill="#107c41"/><rect x="546" y="744" width="13" height="13" fill="#0e6b38"/><text x="552.500" y="754.500" class="m" style="font-size:10px;font-weight:bold;fill:#fff">X</text>
<!-- word -->
<rect x="602" y="740" width="17" height="21" fill="#2b7cd3"/><rect x="602" y="740" width="17" height="6" fill="#41a5ee"/><rect x="602" y="754" width="17" height="7" fill="#185abd"/><rect x="595" y="744" width="13" height="13" fill="#1a5cbe"/><text x="601.500" y="754.500" class="m" style="font-size:10px;font-weight:bold;fill:#fff">W</text>
<!-- outlook -->
<rect x="650" y="740" width="18" height="20" fill="#28a8ea"/><rect x="650" y="740" width="9" height="7" fill="#0078d4"/><rect x="650" y="752" width="18" height="8" fill="#0a5ea8"/><rect x="643" y="744" width="13" height="13" fill="#1a74c8"/><text x="649.500" y="754.500" class="m" style="font-size:10px;font-weight:bold;fill:#fff">O</text>
<!-- ppt -->
<circle cx="706" cy="750" r="10.500" fill="#e8692f"/><path d="M706 739.500a10.500 10.500 0 0 1 10.500 10.500h-10.500z" fill="#f0a080"/><rect x="693" y="744" width="13" height="13" fill="#d2a070"/><text x="699.500" y="754.500" class="m" style="font-size:10px;font-weight:bold;fill:#fff">P</text>
<!-- publisher -->
<path d="M748 740h12a7 7 0 0 1 7 7v6a7 7 0 0 1-7 7h-12z" fill="#1b8a8f"/><path d="M748 740h12a7 7 0 0 1 7 7v3h-19z" fill="#35c0c6"/><rect x="742" y="744" width="13" height="13" fill="#0f6f76"/><text x="748.500" y="754.500" class="m" style="font-size:10px;font-weight:bold;fill:#fff">P</text>
<!-- access -->
<rect x="797" y="740" width="18" height="21" rx="5" fill="#a4373a"/><path d="M797 745c0-3 3-5 9-5s9 2 9 5v2h-18z" fill="#d89a8f"/><rect x="790" y="744" width="13" height="13" fill="#b7282e"/><text x="796.500" y="754.500" class="m" style="font-size:10px;font-weight:bold;fill:#fff">A</text>
<!-- onenote -->
<rect x="846" y="740" width="18" height="21" fill="#a958c8"/><rect x="858" y="740" width="6" height="21" fill="#c883dc"/><rect x="839" y="744" width="13" height="13" fill="#7a2f9e"/><text x="845.500" y="754.500" class="m" style="font-size:10px;font-weight:bold;fill:#fff">N</text>
<!-- bluestacks -->
<path d="M890 744l11-5l11 5v11l-11 6l-11-6z" fill="#4ba63a"/><path d="M890 755l11 6l11-6v-4l-11 6l-11-6z" fill="#2c7fd8"/><path d="M890 748l11 6v3l-11-6z" fill="#e24830"/><path d="M912 748l-11 6v3l11-6z" fill="#f0c030"/><ellipse cx="901" cy="745" rx="6" ry="3.500" fill="#333"/>
<!-- chrome k -->
<circle cx="947" cy="748" r="12" fill="#e33b2e"/><path d="M947 748l-11 5a12 12 0 0 0 12 7z" fill="#34a853"/><path d="M947 748l11-4a12 12 0 0 1-10 16z" fill="#fbc02d"/><circle cx="947" cy="748" r="5.500" fill="#fff"/><circle cx="947" cy="748" r="4.300" fill="#2b85e4"/><circle cx="955" cy="755" r="8" fill="#3a3a3a"/><text x="955" y="759" class="m" style="font-size:9.500px;fill:#ddd">K</text>
<!-- underlines -->
<path d="M391 767h40M489 767h40M534 767h47M587 767h40M685 767h40M734 767h40M783 767h40M930 767h40" stroke="#76b9ed" stroke-width="2"/>
<!-- watermark -->
<text x="0" y="0" class="m" transform="translate(683 750) scale(1.16 .9)" direction="rtl" style="font-family:'DejaVu Sans',sans-serif;font-size:48px;fill:#c8c8c8;fill-opacity:.62;stroke:#c8c8c8;stroke-opacity:.62;stroke-width:.6">خمسات</text>
<!-- tray -->
<path d="M1093 751l6-6l6 6" fill="none" stroke="#fff" stroke-width="1.100"/>
<path d="M1116 746h3l4-4v14l-4-4h-3zM1126 745c1.500 2 1.500 6 0 8M1129 743c2.500 3 2.500 9 0 12" fill="none" stroke="#fff" stroke-width="1.100"/>
<path d="M1142 755c1-5 4-9 10-11M1146 755c1-3 3-6 6-7M1149 755c.5-1.500 1.500-2.500 3-3" fill="none" stroke="#ccc" stroke-width="1.200"/><circle cx="1153" cy="754.500" r="1.300" fill="#fff"/>
<rect x="1165" y="740" width="12" height="18" rx="5" fill="#2a80d8"/><path d="M1168 745l6 8l-3 3v-14l3 3l-6 8" fill="none" stroke="#fff"/>
<path d="M1191 746h10v9h-10zM1201 749h2v3h-2M1188 745v3M1191 745v3M1187 748h5v2c0 1.500-1 2-2.500 2s-2.500-.5-2.500-2z" fill="none" stroke="#fff"/>
<text x="1213" y="753" style="font-size:12px;fill:#eee">ENG</text>
<text x="1277.500" y="743" class="m" style="font-size:12px;fill:#e8e8e8">08:13</text><text x="1278" y="761" class="m" style="font-size:12px;fill:#e8e8e8">04/10/2025</text>
<path d="M1325 741h16v11h-9l-3 3v-3h-4z" fill="#fff"/><path d="M1328 744.500h10M1328 747.500h10" stroke="#444"/>
<circle cx="1341" cy="755" r="7.500" fill="#444" stroke="#777"/><text x="1341" y="759.500" class="m" style="font-size:11px;fill:#eee">1</text>
<path d="M1362.500 728v40" stroke="#32465a"/>
</svg>
</body></html>
